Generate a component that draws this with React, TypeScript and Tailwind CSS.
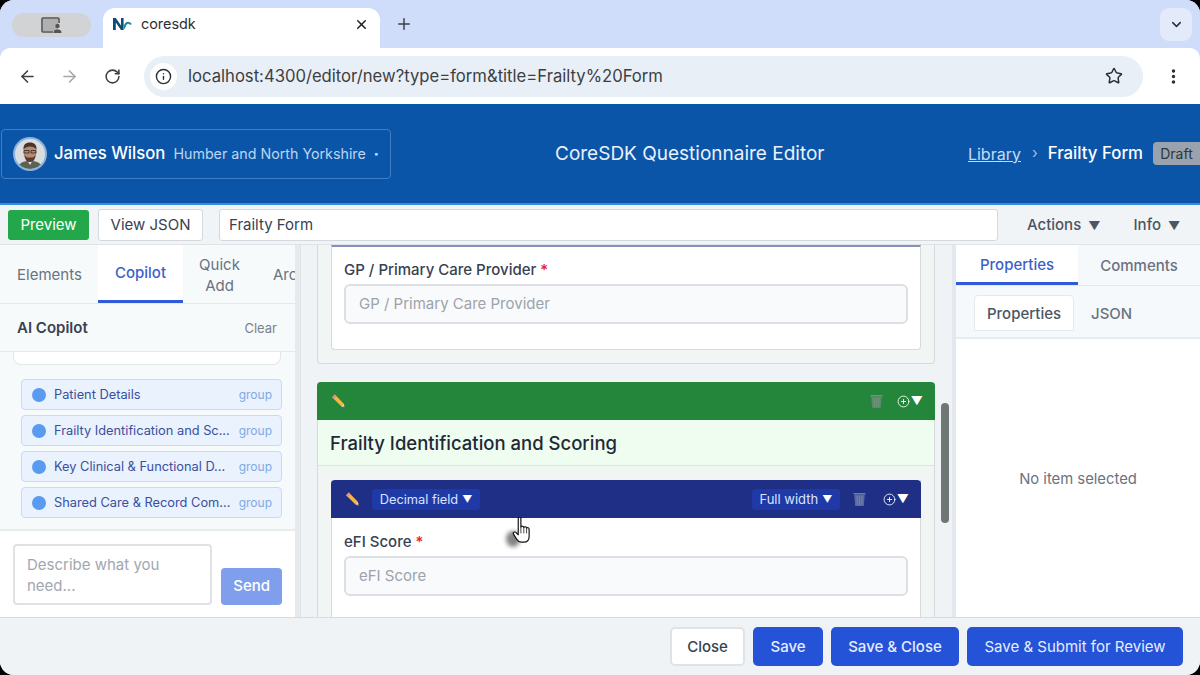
import { ArrowLeft, ArrowRight, ChevronDown, CirclePlus, Info, MoreVertical, Plus, RotateCw, Star, X } from "lucide-react";

function PencilIcon() {
    return (
        <svg width="16" height="16" viewBox="0 0 15 15" className="shrink-0">
            <path d="M4.5 1.5 L13 10 L10.5 12.5 L2 4 Z" fill="#f6b73c" />
            <path d="M4.5 1.5 L2 4 L3.6 5.6 L6.1 3.1 Z" fill="#e58a9a" />
            <path d="M13 10 L14 14 L10.5 12.5 Z" fill="#f3d9b5" />
            <path d="M13.4 12 L14 14 L12.2 13.3 Z" fill="#444" />
        </svg>
    );
}

function TrashIcon({ tint }: { tint: string }) {
    return (
        <svg width="15" height="16" viewBox="0 0 15 16" className="shrink-0">
            <path d="M1.5 2 H13.5 V3.5 H1.5 Z" fill="#8f979c" opacity="0.75" />
            <path d="M2.2 3.5 H12.8 L11.8 15 H3.2 Z" fill={tint} />
            <path d="M5 5 L5.5 14 M7.5 5 V14 M10 5 L9.5 14" stroke="#aab0b5" strokeWidth="0.6" opacity="0.5" />
        </svg>
    );
}

function AddMenu() {
    return (
        <div className="flex items-center text-white">
            <CirclePlus size={13} strokeWidth={1.6} />
            <span className="text-[12px] leading-none ml-[1px]">▼</span>
        </div>
    );
}

function Avatar() {
    return (
        <svg width="34" height="34" viewBox="0 0 34 34" className="shrink-0">
            <defs>
                <clipPath id="avatar-clip">
                    <circle cx="17" cy="17" r="15" />
                </clipPath>
            </defs>
            <circle cx="17" cy="17" r="17" fill="#8db2d8" />
            <g clipPath="url(#avatar-clip)">
                <rect width="34" height="34" fill="#d9dde0" />
                <path d="M3 34 C4 26 11 24 17 24 C23 24 30 26 31 34 Z" fill="#5a6156" />
                <path d="M14 23 L17 28 L20 23 Z" fill="#e6e3dc" />
                <ellipse cx="17" cy="15.5" rx="6.5" ry="8.5" fill="#b98a70" />
                <path d="M10.5 13 C10 6.5 14 5.5 17 5.5 C21 5.5 24 7.5 23.5 13 C22 10 20 9.5 17 9.5 C14 9.5 12 10 10.5 13 Z" fill="#4a3329" />
                <path d="M11.5 18 C12 24.5 15 25 17 25 C19 25 22 24.5 22.5 18 C21 21 19 20.5 17 20.5 C15 20.5 13 21 11.5 18 Z" fill="#5a3d30" />
                <path d="M11 13.5 H16 V16 H11 Z M18 13.5 H23 V16 H18 Z" fill="none" stroke="#2c2a2a" strokeWidth="0.8" />
            </g>
        </svg>
    );
}

function CoreLogo() {
    return (
        <svg width="20" height="14" viewBox="0 0 20 14">
            <path d="M1 13 V1 H3.8 L9 8.5 V1 H11.6 V13 H9 L3.8 5.5 V13 Z" fill="#0f4c75" />
            <path d="M11.8 9 C12.6 4.5 17 3 19.8 7 L18.2 8 C16.6 6 14.8 6.4 13.8 9.5 C13.4 11 12.6 12 11.8 12 Z" fill="#1e8aa0" />
        </svg>
    );
}

function HandCursor() {
    return (
        <svg width="36" height="40" viewBox="0 0 36 40" className="absolute left-[498px] top-[513px]">
            <defs>
                <filter id="hand-shadow" x="-50%" y="-50%" width="200%" height="200%">
                    <feGaussianBlur stdDeviation="2" />
                </filter>
            </defs>
            <ellipse cx="15" cy="26" rx="7" ry="8" fill="#333" opacity="0.6" filter="url(#hand-shadow)" />
            <g transform="translate(8 2) scale(0.98 0.92)">
                <path
                    d="M12.5 3.5 C12.5 2 15.2 2 15.2 3.5 V13 C15.6 11.8 18 11.8 18.2 13.5 C18.8 12.4 20.8 12.6 21 14.2 C21.8 13.4 23.6 13.8 23.6 15.5 V23 C23.6 27 21.4 29.5 18.2 29.5 H15.5 C13.2 29.5 12 28.2 10.8 26.2 L7.5 20.5 C6.8 19 8.8 17.8 10 19 L12.5 21.5 Z"
                    fill="#fff"
                    stroke="#111"
                    strokeWidth="1.2"
                    strokeLinejoin="round"
                />
                <path d="M15.2 13 V20 M18.2 13.5 V20 M21 14.2 V20" stroke="#111" strokeWidth="0.8" />
            </g>
        </svg>
    );
}

const suggestions = [
    "Patient Details",
    "Frailty Identification and Sc...",
    "Key Clinical & Functional D...",
    "Shared Care & Record Com...",
];

function CopilotPanel() {
    return (
        <aside className="w-[295px] shrink-0 flex flex-col bg-[#f6fafb]">
            <div className="h-[59px] shrink-0 flex overflow-hidden border-b border-[#e5e9ec] text-[15px] text-[#6b7280]">
                <div className="w-[98px] shrink-0 pl-[17px] pt-[3px] flex items-center">Elements</div>
                <div className="w-[85px] shrink-0 pt-[2px] bg-white border-b-[3px] border-[#2f5bd8] text-[#3b5fc9] font-medium flex items-center justify-center">Copilot</div>
                <div className="w-[73px] shrink-0 pt-[1px] text-center leading-[21px] flex items-center justify-center">
                    Quick
                    <br />
                    Add
                </div>
                <div className="pl-[17px] pt-[3px] flex items-center">Arc</div>
            </div>
            <div className="h-[48px] shrink-0 flex items-center justify-between pl-[17px] pr-[18px] pt-[2px] border-b border-[#e5e9ec]">
                <span className="text-[15px] font-semibold text-[#374151]">AI Copilot</span>
                <span className="text-[13px] text-[#7b8289]">Clear</span>
            </div>
            <div className="flex-1 min-h-0 overflow-hidden px-[13px]">
                <div className="h-[13px] bg-white border border-t-0 border-[#e3e6e9] rounded-b-[8px] mr-[1px]" />
                <div className="mt-[14px] ml-[8px] flex flex-col gap-[5px]">
                    {suggestions.map((s) => (
                        <div key={s} className="h-[31px] flex items-center pl-[10px] pr-[9px] bg-[#e9f2fd] border border-[#c5dcf8] rounded-[4px]">
                            <span className="w-[14px] h-[14px] rounded-full bg-[#5a9bf2] shrink-0" />
                            <span className="ml-[8px] flex-1 whitespace-nowrap text-[12.8px] text-[#3a4f9f]">{s}</span>
                            <span className="text-[12px] text-[#7dabe6]">group</span>
                        </div>
                    ))}
                </div>
            </div>
            <div className="h-[88px] shrink-0 bg-white border-t-2 border-[#e8ecef] flex items-end gap-[9px] pl-[13px] pr-[13px] pb-[12px]">
                <div className="w-[200px] h-[61px] border-2 border-[#dfe2e5] rounded-[4px] px-[12px] pt-[8px] text-[15px] leading-[21px] text-[#a1a7ae]">Describe what you need...</div>
                <button className="w-[61px] h-[37px] rounded-[4px] bg-[#7f9fec] text-white text-[15px] font-medium">Send</button>
            </div>
        </aside>
    );
}

function FieldInput({ label }: { label: string }) {
    return (
        <>
            <div className="text-[15px] leading-[20px] font-medium text-[#374151]">
                {label} <span className="text-[#e02424]">*</span>
            </div>
            <div className="mt-[4px] h-[40px] flex items-center px-[13px] bg-[#f8fafb] border-2 border-[#dcdfe3] rounded-[6px] text-[15px] text-[#9ca3ab]">{label}</div>
        </>
    );
}

function Canvas() {
    return (
        <main className="relative flex-1 min-w-0 overflow-hidden bg-[#f0f3f5] border-l border-[#dfe3e6]">
            <div className="w-[618px] ml-[16px] flex flex-col">
                <div className="bg-[#f1f5f4] border-x border-b border-[#d6dadc] rounded-b-[4px] px-[13px] pb-[13px]">
                    <div className="h-[105px] bg-white border border-[#d6dadc] border-t-2 border-t-[#8a8fb8] rounded-b-[4px] px-[12px] pt-[13px]">
                        <FieldInput label="GP / Primary Care Provider" />
                    </div>
                </div>
                <div className="mt-[18px] bg-[#f1f5f4] border-x border-[#d6dadc] rounded-t-[4px]">
                    <div className="h-[38px] -mx-[1px] bg-[#23863b] rounded-t-[4px] flex items-center justify-between pl-[13px] pr-[12px]">
                        <PencilIcon />
                        <div className="flex items-center gap-[13px]">
                            <TrashIcon tint="#5c8a68" />
                            <AddMenu />
                        </div>
                    </div>
                    <div className="h-[46px] pt-[2px] flex items-center px-[12px] bg-[#eefdf0] border-b border-[#dfe6e2] text-[18.5px] font-medium text-[#1f2937]">Frailty Identification and Scoring</div>
                    <div className="mt-[14px] mx-[13px] h-[160px] bg-white border-x border-[#d6dadc]">
                        <div className="h-[38px] -mx-[1px] bg-[#1e2f85] rounded-t-[4px] flex items-center pl-[13px] pr-[12px]">
                            <PencilIcon />
                            <div className="ml-[12px] pt-[1px] h-[21px] w-[108px] rounded-[3px] bg-[#1f3aa6] text-[#d9e4ff] text-[12.8px] flex items-center justify-center gap-[4px]">
                                Decimal field <span className="text-[10px] text-white">▼</span>
                            </div>
                            <div className="ml-auto pt-[1px] h-[21px] w-[88px] rounded-[3px] bg-[#1f3aa6] text-[#d9e4ff] text-[13px] flex items-center justify-center gap-[4px]">
                                Full width <span className="text-[10px] text-white">▼</span>
                            </div>
                            <div className="ml-[12px] flex items-center gap-[16px]">
                                <TrashIcon tint="#5a6aa0" />
                                <AddMenu />
                            </div>
                        </div>
                        <div className="px-[12px] pt-[14px]">
                            <FieldInput label="eFI Score" />
                        </div>
                    </div>
                </div>
            </div>
            <div className="absolute left-[640px] top-[158px] w-[8px] h-[120px] rounded-full bg-[#6f7774]" />
        </main>
    );
}

function PropertiesPanel() {
    return (
        <aside className="w-[248px] shrink-0 flex flex-col bg-white border-l-4 border-[#e3e7ee]">
            <div className="h-[41px] shrink-0 flex bg-[#f6f9fb] border-b border-[#e5e9ec] text-[15px]">
                <div className="w-[122px] bg-white border-b-[3px] border-[#2f5bd8] text-[#3b5fc9] font-medium flex items-center justify-center pt-[3px]">Properties</div>
                <div className="flex-1 text-[#6b7280] font-medium flex items-center justify-center pt-[3px]">Comments</div>
            </div>
            <div className="h-[53px] shrink-0 flex items-end pl-[18px] bg-[#f6f9fb] border-b-2 border-[#e8ecef] text-[15px] font-medium">
                <div className="w-[100px] h-[36px] mb-[6px] pt-[3px] bg-white border border-[#e5e9ec] rounded-t-[4px] text-[#4b5563] flex items-center justify-center">Properties</div>
                <div className="ml-[17px] h-[36px] mb-[6px] pt-[3px] text-[#6b7280] flex items-center">JSON</div>
            </div>
            <div className="flex-1 flex items-center justify-center pt-[2px] text-[14.8px] text-[#6b7280]">No item selected</div>
        </aside>
    );
}

export default function App() {
    return (
        <div className="relative w-[1200px] h-[675px] bg-black font-['Inter',sans-serif] overflow-hidden">
            <div className="w-full h-full rounded-[14px] overflow-hidden flex flex-col bg-white">
                {/* browser tab strip */}
                <div className="relative h-[48px] shrink-0 bg-[#cfddfa] flex items-start pl-[12px]">
                    <div className="mt-[13px] w-[79px] h-[24px] rounded-full bg-[#d2d3d5] flex items-center justify-center">
                        <svg width="22" height="17" viewBox="0 0 22 17" fill="none" stroke="#555" strokeWidth="1.6">
                            <path d="M12 15 H2 A1 1 0 0 1 1 14 V2 A1 1 0 0 1 2 1 H17 A1 1 0 0 1 18 2 V6" />
                            <rect x="2" y="2" width="15" height="12" fill="#9a9a9a" stroke="none" opacity="0.6" />
                            <circle cx="16.5" cy="9" r="2.2" fill="#555" stroke="none" />
                            <path d="M12.5 16 C12.5 13 14.5 12.5 16.5 12.5 C18.5 12.5 20.5 13 20.5 16 Z" fill="#555" stroke="none" />
                        </svg>
                    </div>
                    <div className="relative ml-[12px] mt-[8px] w-[277px] h-[40px] bg-white rounded-t-[12px] flex items-center pl-[9px] pr-[12px] pb-[8px]">
                        <CoreLogo />
                        <span className="ml-[9px] text-[14.4px] text-[#2b2f33]">coresdk</span>
                        <X size={15} strokeWidth={2.4} className="ml-auto -mr-[1px] text-[#222]" />
                    </div>
                    <Plus size={18} strokeWidth={2} className="ml-[15px] mt-[15px] text-[#3c4043]" />
                    <div className="ml-auto mr-[8px] mt-[8px] w-[32px] h-[33px] rounded-[9px] bg-[#e3ebfb] flex items-center justify-center">
                        <ChevronDown size={15} strokeWidth={2.4} className="text-[#2b2f33]" />
                    </div>
                </div>
                {/* address bar */}
                <div className="h-[56px] shrink-0 bg-[#cfddfa]">
                    <div className="h-full bg-white rounded-t-[10px] flex items-center pl-[18px] pr-[17px]">
                        <ArrowLeft size={19} strokeWidth={2} className="text-[#3c4043]" />
                        <ArrowRight size={19} strokeWidth={2} className="ml-[23px] text-[#a4a7ab]" />
                        <RotateCw size={17} strokeWidth={2.2} className="ml-[25px] text-[#3c4043]" />
                        <div className="ml-[23px] w-[999px] h-[41px] rounded-full bg-[#e9eff6] flex items-center pl-[6px] pr-[20px]">
                            <div className="w-[27px] h-[27px] rounded-full bg-white flex items-center justify-center">
                                <Info size={17} strokeWidth={2} className="text-[#2b2f33]" />
                            </div>
                            <span className="ml-[11px] text-[16.65px] text-[#3c4043]">localhost:4300/editor/new?type=form&amp;title=Frailty%20Form</span>
                            <Star size={18} strokeWidth={2} className="ml-auto text-[#2b2f33]" />
                        </div>
                        <MoreVertical size={19} strokeWidth={2.4} className="ml-auto text-[#2b2f33]" />
                    </div>
                </div>
                {/* app header */}
                <header className="h-[101px] shrink-0 bg-[#0b55a8] border-b-2 border-[#3a8be0] flex items-center pl-[1px] relative">
                    <div className="w-[390px] h-[50px] border border-[#3f7fc4] rounded-[4px] flex items-center pl-[11px]">
                        <Avatar />
                        <span className="ml-[7px] text-[16.7px] font-medium text-white">James Wilson</span>
                        <span className="ml-[8px] text-[14.25px] text-[#bcd5f2]">Humber and North Yorkshire</span>
                        <span className="ml-[8px] text-[9px] text-[#bcd5f2]">▪</span>
                    </div>
                    <div className="ml-[164px] pt-[2px] text-[19px] text-[#e9f1fb]">CoreSDK Questionnaire Editor</div>
                    <div className="ml-auto flex items-center">
                        <span className="text-[16px] text-[#c6dcf5] underline">Library</span>
                        <span className="ml-[11px] text-[15px] text-[#9cbfe6]">›</span>
                        <span className="ml-[10px] text-[16.8px] font-medium text-white">Frailty Form</span>
                        <span className="ml-[10px] w-[47px] h-[23px] rounded-l-[4px] bg-[#9aa3ad] text-[14px] text-[#2f3740] flex items-center justify-center">Draft</span>
                    </div>
                </header>
                {/* editor toolbar */}
                <div className="h-[40px] shrink-0 bg-[#f1f4f6] border-b border-[#dfe3e6] flex items-center pl-[8px] pt-[1px] text-[15px]">
                    <button className="w-[81px] h-[30px] rounded-[3px] bg-[#22a74a] text-white">Preview</button>
                    <button className="ml-[9px] w-[105px] h-[32px] rounded-[3px] bg-white border border-[#d5d9dd] text-[#374151]">View JSON</button>
                    <div className="ml-[16px] w-[779px] h-[32px] rounded-[3px] bg-white border border-[#d5d9dd] pl-[9px] flex items-center text-[#374151]">Frailty Form</div>
                    <span className="ml-[29px] text-[#4b5563] font-medium">Actions <span className="ml-[3px] text-[12px]">▼</span></span>
                    <span className="ml-[33px] text-[#4b5563] font-medium">Info <span className="ml-[3px] text-[12px]">▼</span></span>
                </div>
                {/* three columns */}
                <div className="h-[373px] shrink-0 flex min-h-0 border-b border-[#d8dcdf]">
                    <CopilotPanel />
                    <div className="w-[5px] shrink-0 bg-[#e6eaed]" />
                    <Canvas />
                    <PropertiesPanel />
                </div>
                {/* footer */}
                <footer className="flex-1 bg-[#f0f3f5] flex items-center justify-end gap-[8px] pr-[17px] pb-[1px] text-[15px]">
                    <button className="w-[75px] h-[39px] pt-[2px] rounded-[5px] bg-white border-2 border-[#e0e3e6] text-[#374151] font-medium">Close</button>
                    <button className="w-[70px] h-[39px] pt-[2px] rounded-[5px] bg-[#2453d8] text-[#e6edfc] font-medium">Save</button>
                    <button className="w-[128px] h-[39px] pt-[2px] rounded-[5px] bg-[#2453d8] text-[#e6edfc] font-medium">Save &amp; Close</button>
                    <button className="w-[216px] h-[39px] pt-[2px] rounded-[5px] bg-[#2453d8] text-[#e6edfc]">Save &amp; Submit for Review</button>
                </footer>
            </div>
            <HandCursor />
        </div>
    );
}
